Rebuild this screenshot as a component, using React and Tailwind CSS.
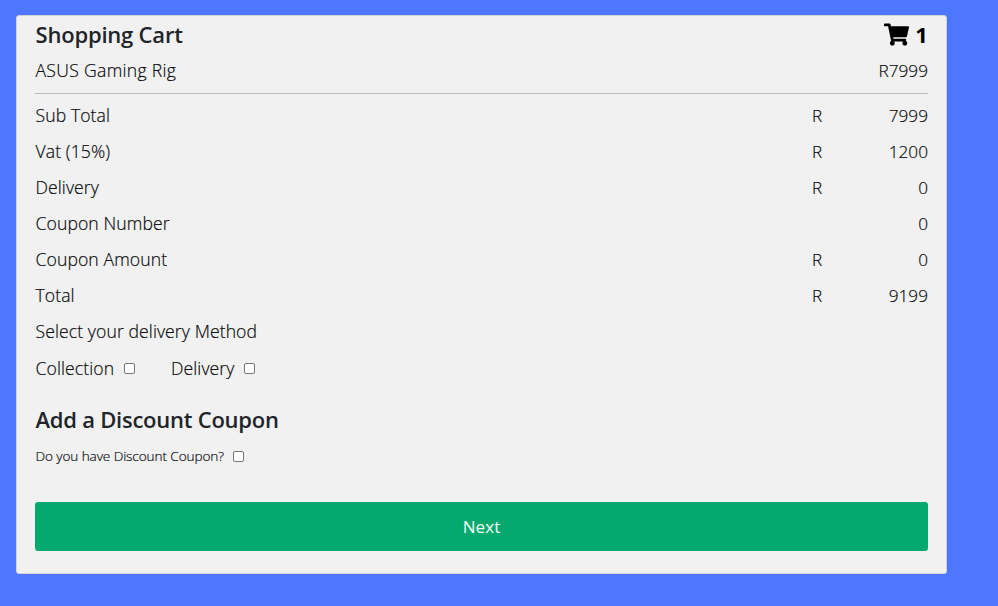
import { FaShoppingCart } from "react-icons/fa";

function Row({ label, currency, amount }) {
  return (
    <div className="flex h-9 items-center pb-px">
      <span className="flex-1 pl-[0.5px]">{label}</span>
      <span className="w-[50px] text-left text-[17px]">{currency}</span>
      <span className="w-[66px] text-right text-[17.2px] tracking-normal">{amount}</span>
    </div>
  );
}

function Check() {
  return <span className="inline-block size-[11px] rounded-[2px] border border-[#767676] bg-white" />;
}

export default function App() {
  return (
    <div className="h-[606px] bg-[#4d77ff] pl-4 pt-[15px] font-['Open_Sans',sans-serif] text-[17.6px] font-light tracking-[0.09px] text-black">
      <main className="h-[559px] w-[931px] rounded-[3px] border border-[#d3d3d3] bg-[#f1f1f1] px-[18px] [-webkit-text-stroke:0.2px_#212529]">
        <div className="flex h-[37px] items-center justify-between pb-0.5 text-[22px] leading-[30px] [-webkit-text-stroke:0px]">
          <h1 className="pl-[0.5px] font-semibold tracking-[-0.2px] text-[#212529]">Shopping Cart</h1>
          <span className="flex items-center gap-1.5 font-bold text-black"><FaShoppingCart size={25} className="mt-0.5" />1</span>
        </div>
        <div className="flex h-9 items-center justify-between pb-px"><span className="pl-[0.5px] tracking-[0.3px]">ASUS Gaming Rig</span><span className="text-[17.2px] tracking-normal">R7999</span></div>
        <hr className="mt-1 mb-1 border-[#bdbdbd]" />
        <Row label="Sub Total" currency="R" amount="7999" />
        <Row label="Vat (15%)" currency="R" amount="1200" />
        <Row label="Delivery" currency="R" amount="0" />
        <Row label="Coupon Number" amount="0" />
        <Row label="Coupon Amount" currency="R" amount="0" />
        <Row label="Total" currency="R" amount="9199" />
        <Row label="Select your delivery Method" />
        <div className="flex h-9 items-center">
          <label className="flex w-[136px] items-center pt-px"><span className="w-[89px] pb-px pl-[0.5px]">Collection</span><Check /></label>
          <label className="flex items-center pt-px"><span className="w-[73px] pb-px">Delivery</span><Check /></label>
        </div>
        <h2 className="mt-[15px] mb-px flex h-9 items-center pl-[0.5px] text-[22px] font-semibold tracking-[-0.24px] text-[#212529] [-webkit-text-stroke:0px]">Add a Discount Coupon</h2>
        <label className="flex h-9 items-center text-[13.6px] tracking-[-0.1px]"><span className="w-[198px] pt-px pl-[0.5px] whitespace-nowrap">Do you have Discount Coupon?</span><Check /></label>
        <button className="mt-7 h-[49px] w-full rounded-[3px] bg-[#04aa6d] text-[17px] font-normal text-white [-webkit-text-stroke:0px]">Next</button>
      </main>
    </div>
  );
}
